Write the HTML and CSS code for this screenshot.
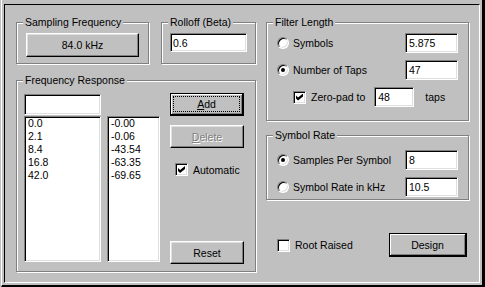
FILE: index.html
```html
<!DOCTYPE html>
<html>
<head>
  <title>Filter Design</title>
  <link rel="stylesheet" href="styles.css">
</head>
<body>

  <div class="window">
    <div class="frame">

      <div class="col-left">
        <div class="top-row">
          <div class="group g-sampling">
            <span class="legend">Sampling Frequency</span>
            <div class="btn btn-freq">84.0 kHz</div>
          </div>
          <div class="group g-rolloff">
            <span class="legend">Rolloff (Beta)</span>
            <div class="field">0.6</div>
          </div>
        </div>

        <div class="group g-freq">
          <span class="legend">Frequency Response</span>
          <div class="freq-lists">
            <div class="field entry"></div>
            <div class="listbox list-a">
              <div>0.0</div>
              <div>2.1</div>
              <div>8.4</div>
              <div>16.8</div>
              <div>42.0</div>
            </div>
            <div class="listbox list-b">
              <div>-0.00</div>
              <div>-0.06</div>
              <div>-43.54</div>
              <div>-63.35</div>
              <div>-69.65</div>
            </div>
          </div>
          <div class="freq-buttons">
            <div class="btn default focus"><span><u>A</u>dd</span></div>
            <div class="btn disabled btn-delete"><span><u>D</u>elete</span></div>
            <div class="check-row auto">
              <span class="check checked"></span>
              <span>Automatic</span>
            </div>
            <div class="btn btn-reset">Reset</div>
          </div>
        </div>
      </div>

      <div class="col-right">
        <div class="group g-filter">
          <span class="legend">Filter Length</span>
          <div class="opt-row">
            <span class="radio"></span>
            <span class="opt-label">Symbols</span>
            <div class="field num">5.875</div>
          </div>
          <div class="opt-row">
            <span class="radio checked"></span>
            <span class="opt-label">Number of Taps</span>
            <div class="field num">47</div>
          </div>
          <div class="opt-row pad-row">
            <span class="check checked"></span>
            <span class="opt-label">Zero-pad to</span>
            <div class="field pad">48</div>
            <span class="taps">taps</span>
          </div>
        </div>

        <div class="group g-rate">
          <span class="legend">Symbol Rate</span>
          <div class="opt-row">
            <span class="radio checked"></span>
            <span class="opt-label">Samples Per Symbol</span>
            <div class="field num">8</div>
          </div>
          <div class="opt-row">
            <span class="radio"></span>
            <span class="opt-label">Symbol Rate in kHz</span>
            <div class="field num">10.5</div>
          </div>
        </div>

        <div class="bottom-row">
          <span class="check"></span>
          <span class="opt-label">Root Raised</span>
          <div class="btn default btn-design">Design</div>
        </div>
      </div>

    </div>
  </div>

</body>
</html>
```

FILE: styles.css
```css
body {
  margin: 0;
  background-color: #c0c0c0;
  font-family: "Liberation Sans", Arial, sans-serif;
  font-size: 10.5px;
  color: #000;
}

.window {
  box-sizing: border-box;
  width: 484px;
  height: 287px;
  margin-left: 1px;
  border-left: 1px solid #fff;
  border-right: 3px solid #000;
  border-bottom: 2px solid #000;
  padding: 4px 2px 2px 2px;
}

.frame {
  box-sizing: border-box;
  height: 100%;
  border: 1px solid;
  border-color: #000 #fff #fff #000;
  display: flex;
  gap: 10px;
  padding: 17px 10px 0 11px;
}

/* group boxes with etched border */
.group {
  position: relative;
  box-sizing: border-box;
  border: 1px solid #808080;
  box-shadow: inset 1px 1px 0 #fff, 1px 1px 0 #fff;
}

.legend {
  position: absolute;
  top: -7px;
  left: 6px;
  padding: 0 2px;
  background-color: #c0c0c0;
  line-height: 13px;
  white-space: nowrap;
}

/* buttons */
.btn {
  position: relative;
  box-sizing: border-box;
  display: flex;
  align-items: center;
  justify-content: center;
  height: 23px;
  border: 1px solid;
  border-color: #fff #000 #000 #fff;
  box-shadow: inset -1px -1px 0 #808080, inset 1px 1px 0 #dfdfdf;
}

.btn.default {
  border: 1px solid #000;
  border-width: 1px 2px 2px 1px;
  box-shadow: inset 1px 1px 0 #fff, inset -1px -1px 0 #808080;
}

.btn.focus::after {
  content: "";
  position: absolute;
  top: 2px;
  left: 2px;
  right: 2px;
  bottom: 2px;
  border: 1px dotted #000;
}

.btn.disabled {
  color: #808080;
  text-shadow: 1px 1px 0 #fff;
}

/* sunken edit fields */
.field {
  box-sizing: border-box;
  height: 20px;
  background-color: #fff;
  border: 1px solid;
  border-color: #808080 #fff #fff #808080;
  box-shadow: inset 1px 1px 0 #000, inset -1px -1px 0 #dfdfdf;
  padding-left: 3px;
  line-height: 18px;
}

.listbox {
  box-sizing: border-box;
  background-color: #fff;
  border: 1px solid;
  border-color: #808080 #fff #fff #808080;
  box-shadow: inset 1px 1px 0 #000, inset -1px -1px 0 #dfdfdf;
  padding: 0 3px;
  line-height: 13px;
}

/* radio and check marks */
.radio {
  position: relative;
  box-sizing: border-box;
  width: 12px;
  height: 12px;
  flex: none;
  border-radius: 50%;
  background-color: #fff;
  border: 1px solid;
  border-color: #808080 #fff #fff #808080;
  box-shadow: inset 1px 1px 0 #000, inset -1px -1px 0 #dfdfdf;
}

.radio.checked::after {
  content: "";
  position: absolute;
  top: 3px;
  left: 3px;
  width: 4px;
  height: 4px;
  border-radius: 50%;
  background-color: #000;
}

.check {
  position: relative;
  box-sizing: border-box;
  width: 13px;
  height: 13px;
  flex: none;
  background-color: #fff;
  border: 1px solid;
  border-color: #808080 #fff #fff #808080;
  box-shadow: inset 1px 1px 0 #000, inset -1px -1px 0 #dfdfdf;
}

.check.checked::after {
  content: "";
  position: absolute;
  top: 2px;
  left: 2px;
  width: 7px;
  height: 7px;
  background-color: #000;
  clip-path: polygon(0 29%, 29% 57%, 100% 0, 100% 43%, 29% 100%, 0 71%);
}

/* left column */
.col-left {
  width: 240px;
  flex: none;
}

.top-row {
  display: flex;
  gap: 12px;
}

.g-sampling {
  width: 133px;
  height: 42px;
  padding: 10px 9px 0 9px;
}

.btn-freq {
  height: 24px;
}

.g-rolloff {
  width: 95px;
  height: 42px;
  padding: 10px 0 0 8px;
}

.g-rolloff .field {
  width: 77px;
  height: 19px;
  padding-left: 2px;
}

.g-freq {
  margin-top: 16px;
  height: 192px;
  display: flex;
  padding: 13px 0 9px 7px;
}

.freq-lists {
  display: grid;
  grid-template-columns: 77px 53px;
  grid-template-rows: 21px 1fr;
  column-gap: 6px;
  row-gap: 1px;
}

.entry {
  height: 21px;
}

.list-a {
  grid-row: 2;
  grid-column: 1;
}

.list-b {
  grid-row: 2;
  grid-column: 2;
}

.freq-buttons {
  display: flex;
  flex-direction: column;
  width: 74px;
  margin: -1px 0 -2px 10px;
}

.btn-delete {
  margin-top: 9px;
}

.check-row {
  display: flex;
  align-items: center;
  gap: 5px;
}

.auto {
  margin-top: 15px;
  padding-left: 5px;
}

.btn-reset {
  margin-top: auto;
}

/* right column */
.col-right {
  width: 203px;
  flex: none;
}

.g-filter {
  height: 99px;
  padding: 10px 10px 0 10px;
}

.g-rate {
  margin-top: 14px;
  height: 65px;
  padding: 14px 10px 0 10px;
}

.opt-row {
  display: flex;
  align-items: center;
  height: 20px;
  margin-bottom: 7px;
}

.opt-label {
  margin-left: 4px;
}

.opt-row .num {
  margin-left: auto;
  width: 53px;
}

.pad-row {
  margin-top: 6px;
  padding-left: 16px;
}

.pad-row .opt-label {
  margin-left: 5px;
}

.field.pad {
  width: 40px;
  margin-left: 9px;
}

.taps {
  margin-left: 11px;
}

.bottom-row {
  display: flex;
  align-items: center;
  margin-top: 33px;
  padding-left: 11px;
}

.bottom-row .opt-label {
  margin-left: 5px;
}

.btn-design {
  margin-left: auto;
  margin-right: 2px;
  width: 78px;
  height: 24px;
}
```
